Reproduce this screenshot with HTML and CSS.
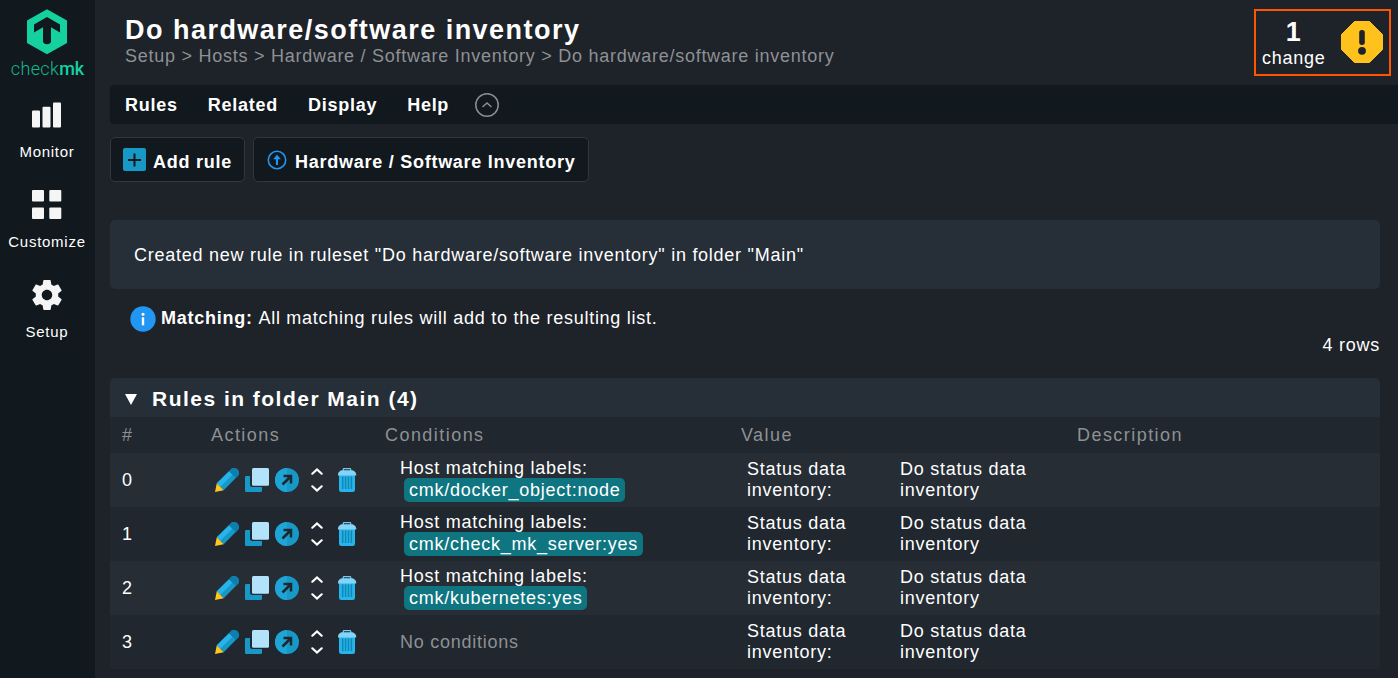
FILE: index.html
```
<!DOCTYPE html>
<html lang="en">
<head>
<meta charset="utf-8">
<title>Do hardware/software inventory</title>
<link rel="stylesheet" href="styles.css">
</head>
<body>
<svg class="sprite" aria-hidden="true">
  <symbol id="pencil" viewBox="0 0 24 24">
    <path d="M1.800 15.300 16 1.200a3.500 3.500 0 0 1 3-1.200 5.500 5.500 0 0 1 5 5 3.500 3.500 0 0 1-1.200 3L8.700 22.200z" fill="#1898c6"/>
    <path d="M1.800 15.300 14 3.200 17.500 6.700 5.300 18.800z" fill="#26b4ea"/>
    <path d="m14 3.200 2-2a3.500 3.500 0 0 1 3-1.200 5.500 5.500 0 0 1 5 5 3.500 3.500 0 0 1-1.200 3l-2 2z" fill="#0c7fae"/>
    <path d="M1.800 15.300 8.700 22.200 0 24z" fill="#ffc623"/>
  </symbol>
  <symbol id="clone" viewBox="0 0 24 24">
    <path d="M1.200 8H5v8.500Q5 19 7.500 19H17v3.800q0 1.200-1.200 1.200H1.200Q0 24 0 22.800V9.200Q0 8 1.200 8z" fill="#1898c6"/>
    <rect x="7" y="0" width="17" height="17.700" rx="1.500" fill="#b3e3fb"/>
  </symbol>
  <symbol id="export" viewBox="0 0 24 24">
    <circle cx="12" cy="12" r="12" fill="#1898c6"/>
    <path d="M12 0a12 12 0 0 0 0 24z" fill="#1ea5d5"/>
    <path d="m7.500 16.500 8-8M8.500 8h7.500v7.500" fill="none" stroke="#1e262e" stroke-width="2.500"/>
  </symbol>
  <symbol id="move" viewBox="0 0 24 24">
    <path d="m7.300 5.700 4.700-4.200 4.700 4.200M7.300 18.300l4.700 4.200 4.700-4.200" fill="none" stroke="#fff" stroke-width="2.200" stroke-linecap="round"/>
  </symbol>
  <symbol id="trash" viewBox="0 0 24 24">
    <path d="M4 6.500h16V21.500Q20 24 17.500 24h-11Q4 24 4 21.500z" fill="#26b4ea"/>
    <path d="M7.700 8.500v12.500M10.600 8.500v12.500M13.500 8.500v12.500M16.400 8.500v12.500" stroke="#1187b6" stroke-width="1.500"/>
    <path d="M8.300 3V1.300Q8.300.6 9 .6h6q.7 0 .7.700V3" fill="none" stroke="#72cdf4" stroke-width="1.200"/>
    <path d="M3 7.500V6Q4.500 2.300 7 2.300h10q2.500 0 4.200 3.700v1.500z" fill="#85d4f8"/>
  </symbol>
</svg>

<div class="app">
  <nav class="sidebar">
    <div class="logo">
      <svg width="40" height="46" viewBox="0 0 40 46"><path d="M20 .3 40 11.500v22.500L20 45.200 0 34v-22.500z" fill="#15d1a0"/><path d="M20 8 33 15.500V23.500L24 18.300V32.500Q23.500 35.300 20 35.300T16 32.500V18.300L7 23.500V15.500z" fill="#11181e"/></svg>
      <div class="wordmark"><span>check</span><b>mk</b></div>
    </div>
    <a class="nav-item"><svg width="30" height="30" viewBox="0 0 30 30" fill="#f5f5f5"><rect x="0" y="10.500" width="8" height="17" rx="1"/><rect x="10.500" y="6.700" width="8" height="20.800" rx="1"/><rect x="21" y="2.500" width="8" height="25" rx="1"/></svg><span>Monitor</span></a>
    <a class="nav-item"><svg width="30" height="30" viewBox="0 0 30 30" fill="#f5f5f5"><rect x="0" y="0" width="12" height="11.500" rx="1"/><rect x="17.300" y="0" width="12" height="11.500" rx="1"/><rect x="0" y="17.500" width="12" height="11.500" rx="1"/><rect x="17.300" y="17.500" width="12" height="11.500" rx="1"/></svg><span>Customize</span></a>
    <a class="nav-item"><svg width="30" height="30" viewBox="2 2 20 20" fill="#f5f5f5"><path d="M19.430 12.980c.04-.32.070-.64.070-.98s-.03-.66-.07-.98l2.110-1.650c.19-.15.240-.42.120-.64l-2-3.460c-.12-.22-.39-.3-.61-.22l-2.490 1c-.52-.4-1.080-.73-1.690-.98l-.38-2.650A.488.488 0 0 0 14 2h-4c-.25 0-.46.180-.49.420l-.38 2.650c-.61.250-1.170.59-1.690.98l-2.490-1c-.23-.09-.49 0-.61.220l-2 3.460c-.13.220-.07.490.120.640l2.110 1.650c-.04.320-.07.650-.07.980s.03.660.070.980l-2.110 1.650c-.19.150-.24.420-.12.640l2 3.460c.12.220.39.300.61.220l2.490-1c.52.400 1.080.73 1.690.98l.38 2.650c.03.240.24.420.49.420h4c.25 0 .46-.18.490-.42l.38-2.650c.61-.25 1.170-.59 1.690-.98l2.490 1c.23.090.49 0 .61-.22l2-3.460c.12-.22.070-.49-.12-.64zM12 15.500c-1.930 0-3.500-1.570-3.500-3.500s1.570-3.500 3.500-3.500 3.500 1.570 3.500 3.500-1.570 3.500-3.500 3.500z"/></svg><span>Setup</span></a>
  </nav>

  <main class="main">
    <header class="header">
      <div>
        <h1>Do hardware/software inventory</h1>
        <div class="breadcrumb">Setup &gt; Hosts &gt; Hardware / Software Inventory &gt; Do hardware/software inventory</div>
      </div>
      <div class="changes">
        <div class="changes-text"><b>1</b><span>change</span></div>
        <svg width="42" height="42" viewBox="0 0 42 42"><path d="M13.500.5h15L41.500 13.500v15L28.500 41.500h-15L.5 28.500v-15z" fill="#ffc21c" stroke="#ffc21c" stroke-linejoin="round"/><rect x="18.200" y="9" width="5.600" height="15" rx="2.700" fill="#1e2229"/><circle cx="21" cy="29.800" r="3.900" fill="#1e2229"/></svg>
      </div>
    </header>

    <div class="menubar">
      <span>Rules</span><span>Related</span><span>Display</span><span>Help</span>
      <svg width="24" height="24" viewBox="0 0 24 24" fill="none" stroke="#8c8f91" stroke-width="1.500"><circle cx="12" cy="12" r="11.200"/><path d="m7.500 14 4.500-4 4.500 4"/></svg>
    </div>

    <div class="shortcuts">
      <a class="btn"><svg width="23" height="23" viewBox="0 0 23 23"><rect width="23" height="23" rx="2" fill="#1898c6"/><path d="M11.500 5.500v13M5 12h13" stroke="#11181e" stroke-width="2"/></svg><span>Add rule</span></a>
      <a class="btn btn-wide"><svg width="20" height="20" viewBox="0 0 20 20" fill="none" stroke="#2196f3"><circle cx="10" cy="10" r="8.700" stroke-width="1.600"/><path d="M10 15V7" stroke-width="2.100"/><path d="m10 4.500 3.800 4.800H6.200z" fill="#2196f3" stroke="none"/></svg><span>Hardware / Software Inventory</span></a>
    </div>

    <div class="message">Created new rule in ruleset "Do hardware/software inventory" in folder "Main"</div>

    <div class="matching">
      <svg width="26" height="26" viewBox="0 0 26 26"><circle cx="13" cy="13" r="12.700" fill="#2196f3"/><circle cx="13" cy="8.200" r="1.500" fill="#fff"/><rect x="11.800" y="11.300" width="2.400" height="8" fill="#fff"/></svg>
      <span><b>Matching:</b> All matching rules will add to the resulting list.</span>
    </div>
    <div class="rowcount">4 rows</div>

    <section class="panel">
      <h2><svg width="12" height="11" viewBox="0 0 12 11"><path d="M0 0h12L6 11z" fill="#fff"/></svg><span>Rules in folder Main (4)</span></h2>
      <div class="row thead"><span>#</span><span>Actions</span><span>Conditions</span><span>Value</span><span>Description</span></div>
      <div class="row">
        <span>0</span>
        <div class="actions"><svg><use href="#pencil"/></svg><svg><use href="#clone"/></svg><svg><use href="#export"/></svg><svg><use href="#move"/></svg><svg><use href="#trash"/></svg></div>
        <div class="cond"><div>Host matching labels:</div><span class="tag">cmk/docker_object:node</span></div>
        <div class="value"><span>Status data inventory:</span><span>Do status data inventory</span></div>
      </div>
      <div class="row">
        <span>1</span>
        <div class="actions"><svg><use href="#pencil"/></svg><svg><use href="#clone"/></svg><svg><use href="#export"/></svg><svg><use href="#move"/></svg><svg><use href="#trash"/></svg></div>
        <div class="cond"><div>Host matching labels:</div><span class="tag">cmk/check_mk_server:yes</span></div>
        <div class="value"><span>Status data inventory:</span><span>Do status data inventory</span></div>
      </div>
      <div class="row">
        <span>2</span>
        <div class="actions"><svg><use href="#pencil"/></svg><svg><use href="#clone"/></svg><svg><use href="#export"/></svg><svg><use href="#move"/></svg><svg><use href="#trash"/></svg></div>
        <div class="cond"><div>Host matching labels:</div><span class="tag">cmk/kubernetes:yes</span></div>
        <div class="value"><span>Status data inventory:</span><span>Do status data inventory</span></div>
      </div>
      <div class="row">
        <span>3</span>
        <div class="actions"><svg><use href="#pencil"/></svg><svg><use href="#clone"/></svg><svg><use href="#export"/></svg><svg><use href="#move"/></svg><svg><use href="#trash"/></svg></div>
        <div class="cond none">No conditions</div>
        <div class="value"><span>Status data inventory:</span><span>Do status data inventory</span></div>
      </div>
    </section>
  </main>
</div>
</body>
</html>
```
FILE: styles.css
```
* { box-sizing: border-box; }
body {
  margin: 0;
  background: #1e2229;
  color: #fff;
  font: 18px/21px "Liberation Sans", Arial, sans-serif;
  letter-spacing: 0.74px;
}
svg { display: block; flex: none; }
.sprite { display: none; }
.app { display: flex; height: 678px; overflow: hidden; }

.sidebar {
  width: 95px;
  flex: none;
  background: #11181e;
  display: flex;
  flex-direction: column;
  align-items: center;
  font-size: 15px;
}
.logo {
  height: 100px;
  padding-top: 9px;
  display: flex;
  flex-direction: column;
  align-items: center;
}
.wordmark {
  margin-top: 3px;
  font: 300 18px/21px Roboto, sans-serif;
  letter-spacing: 0.35px;
  color: #14b98e;
}
.wordmark b { font-weight: 500; letter-spacing: 0; color: #15d1a0; }
.nav-item {
  height: 90px;
  padding-right: 1px;
  display: flex;
  flex-direction: column;
  align-items: center;
  gap: 11px;
}

.main { flex: 1; padding-left: 15px; min-width: 0; }
.header {
  height: 85px;
  padding: 9px 7px 0 15px;
  display: flex;
  justify-content: space-between;
  align-items: flex-start;
}
h1 {
  margin: 5px 0 0;
  font-size: 27px;
  line-height: 32px;
  letter-spacing: 1.48px;
}
.breadcrumb { color: #8e9194; }
.changes {
  width: 137px;
  height: 67px;
  border: 2px solid #ff5500;
  padding: 0 6px;
  display: flex;
  align-items: center;
  justify-content: space-between;
}
.changes svg { margin-bottom: 1px; }
.changes-text {
  display: flex;
  flex-direction: column;
  align-items: center;
}
.changes-text b { font-size: 27px; line-height: 31px; }

.menubar {
  height: 39px;
  padding-left: 15px;
  background: #11181e;
  border-radius: 4px 0 0 4px;
  display: flex;
  align-items: center;
  gap: 30px;
  font-weight: bold;
}
.menubar span { padding-top: 2px; }
.menubar svg { margin: 1px 0 0 -4px; }
.shortcuts { margin-top: 13px; display: flex; gap: 8px; }
.btn {
  height: 45px;
  width: 135px;
  padding: 3px 0 0 12px;
  border: 1px solid #2f3742;
  border-radius: 5px;
  background: #11181e;
  display: flex;
  align-items: center;
  gap: 7px;
  font-weight: bold;
}
.btn svg { margin-bottom: 3px; }
.btn span { padding-top: 2px; }
.btn-wide { width: 336px; padding-left: 13px; gap: 8px; }

.message {
  width: 1270px;
  height: 69px;
  margin-top: 38px;
  padding: 25px 24px;
  border-radius: 5px;
  background: #262e37;
}
.matching {
  margin-top: 17px;
  padding-left: 20px;
  display: flex;
  gap: 5px;
}
.matching span { padding-top: 2px; }
.matching b { margin-right: 1px; }
.rowcount { width: 1270px; margin-top: 3px; text-align: right; }

.panel { width: 1270px; margin-top: 22px; }
h2 {
  margin: 0;
  height: 39px;
  padding: 3px 0 0 15px;
  border-radius: 5px 5px 0 0;
  background: #262e37;
  display: flex;
  align-items: center;
  gap: 15px;
  font-size: 21px;
  letter-spacing: 1.48px;
}
h2 span { padding-bottom: 2px; }
.row {
  height: 54px;
  padding-left: 12px;
  display: grid;
  grid-template-columns: 89px 174px 356px 336px 1fr;
  align-items: center;
  background: #20272e;
}
.row:nth-child(odd) { background: #262d34; }
.thead.row {
  height: 36px;
  background: #20272e;
  color: #8e9194;
  letter-spacing: 1.45px;
}
.actions { display: flex; gap: 6px; padding-left: 4px; }
.actions svg { width: 24px; height: 24px; }
.cond { padding-left: 15px; }
.tag {
  display: block;
  width: fit-content;
  height: 24px;
  margin: -1px 0 1px 4px;
  padding: 2px 5px 0;
  border-radius: 5px;
  background: #0f7681;
}
.none { color: #8e9194; }
.value {
  padding-left: 6px;
  display: grid;
  grid-template-columns: 153px 153px;
}
.value span { width: 135px; }
```
